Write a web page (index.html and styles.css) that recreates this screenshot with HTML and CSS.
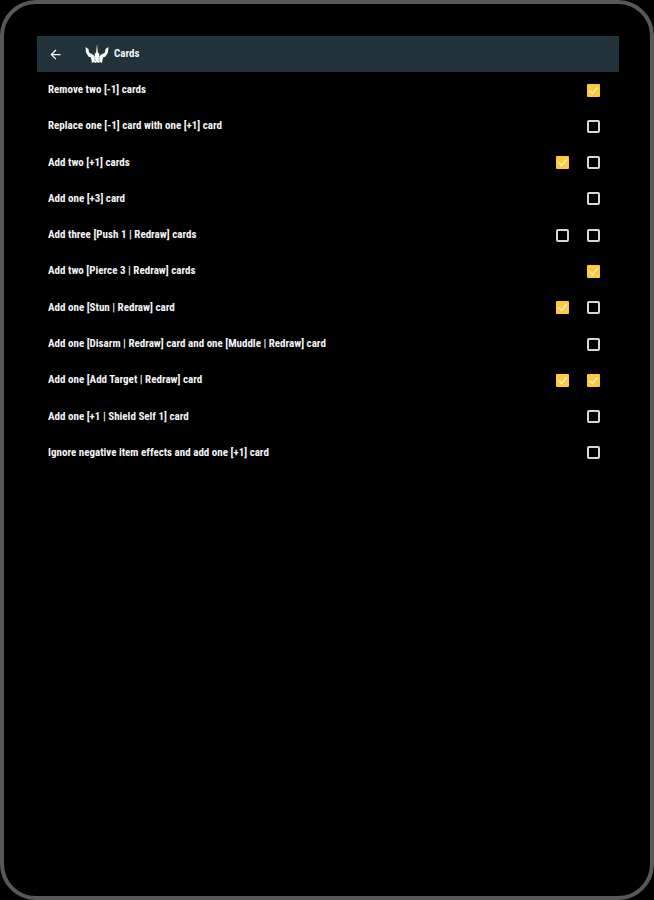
FILE: index.html
```html
<!DOCTYPE html>
<html lang="en">
<head>
<meta charset="utf-8">
<meta name="viewport" content="width=device-width, initial-scale=1">
<title>Cards</title>
<link rel="stylesheet" href="styles.css">
</head>
<body>
<div class="tablet">
	<header class="bar">
		<button class="back" type="button" aria-label="Back">
			<svg viewBox="0 0 24 24" width="15" height="15"><path d="M20 11H7.8l5.6-5.6L12 4l-8 8 8 8 1.4-1.4L7.8 13H20z" fill="#fff"/></svg>
		</button>
		<svg class="logo" viewBox="0 0 24 20" width="24" height="20">
			<path d="M.5 3l3 2 .5 3.500L8.500 11l1.300 2V8.500L11 9.500 12 0l1 9.500 1.200-1V13l1.300-2L20 8.500l.5-3.500 3-2-.5 5.500-2.500 4-2.500 1L17 19l-2-1-1.500 1-1.500-1-1.500 1L9 18l-2 1-1-5.500-2.500-1L1 8.500z" fill="#fff"/>
			<path d="M9.900 13v4.500M14.100 13v4.500" stroke="#22323a" stroke-width=".4"/>
		</svg>
		<h1>Cards</h1>
	</header>
	<ul class="perks">
		<li><span id="p1">Remove two [-1] cards</span><input type="checkbox" aria-labelledby="p1" checked></li>
		<li><span id="p2">Replace one [-1] card with one [+1] card</span><input type="checkbox" aria-labelledby="p2"></li>
		<li><span id="p3">Add two [+1] cards</span><input type="checkbox" aria-labelledby="p3" checked><input type="checkbox" aria-labelledby="p3"></li>
		<li><span id="p4">Add one [+3] card</span><input type="checkbox" aria-labelledby="p4"></li>
		<li><span id="p5">Add three [Push 1 | Redraw] cards</span><input type="checkbox" aria-labelledby="p5"><input type="checkbox" aria-labelledby="p5"></li>
		<li><span id="p6">Add two [Pierce 3 | Redraw] cards</span><input type="checkbox" aria-labelledby="p6" checked></li>
		<li><span id="p7">Add one [Stun | Redraw] card</span><input type="checkbox" aria-labelledby="p7" checked><input type="checkbox" aria-labelledby="p7"></li>
		<li><span id="p8">Add one [Disarm | Redraw] card and one [Muddle | Redraw] card</span><input type="checkbox" aria-labelledby="p8"></li>
		<li><span id="p9">Add one [Add Target | Redraw] card</span><input type="checkbox" aria-labelledby="p9" checked><input type="checkbox" aria-labelledby="p9" checked></li>
		<li><span id="p10">Add one [+1 | Shield Self 1] card</span><input type="checkbox" aria-labelledby="p10"></li>
		<li><span id="p11">Ignore negative item effects and add one [+1] card</span><input type="checkbox" aria-labelledby="p11"></li>
	</ul>
</div>
</body>
</html>
```
FILE: styles.css
```css
*{box-sizing:border-box;}
body,h1,ul{margin:0;padding:0;}
body{background:#000;color:#f4f4f4;font:bold 11px/16px "Roboto Condensed",Roboto,sans-serif;}
.tablet{min-height:100vh;padding:32px 31px 31px 33px;border:4px solid #585858;border-radius:36px;}
.bar{display:flex;align-items:center;height:36px;padding:0 11px;background:#22323a;}
.back{display:flex;margin:0 22px 0 0;padding:0;border:0;background:none;cursor:pointer;}
.logo{margin-right:5px;}
.bar h1{font-size:11px;}
.perks{display:grid;min-height:399px;list-style:none;}
.perks li{display:flex;align-items:center;gap:18px;padding:0 19px 0 11px;}
.perks span{flex:1;}
.perks input{appearance:none;width:13px;height:13px;margin:0;border:2px solid #d8d8d8;border-radius:2px;cursor:pointer;}
.perks input:checked{border:0;border-radius:1px;background:#ffca3a url("data:image/svg+xml,%3Csvg xmlns='http://www.w3.org/2000/svg' viewBox='0 0 13 13'%3E%3Cpath d='M2.500 6.500l3 3 5-6' fill='none' stroke='%23fff3cf' stroke-width='1.500'/%3E%3C/svg%3E");}
```
